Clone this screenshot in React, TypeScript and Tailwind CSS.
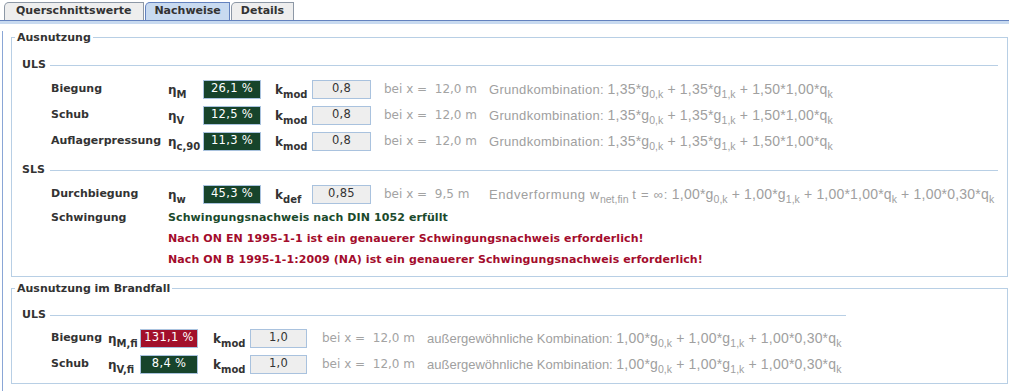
import type { ReactNode } from 'react'

const TABS = [
  { label: 'Querschnittswerte', active: false },
  { label: 'Nachweise', active: true },
  { label: 'Details', active: false },
]

function Sub({ children }: { children: ReactNode }) {
  return <span className="relative top-[4px] text-[10.5px] leading-none">{children}</span>
}

// numbers in the formulas run a little wider than the words
function Num({ children }: { children: ReactNode }) {
  return <span className="text-[14px] tracking-[0.2px]">{children}</span>
}

function Symbol({ base, sub }: { base: string; sub: string }) {
  return (
    <span className="font-bold text-[12px] text-[#333] leading-none whitespace-nowrap">
      {base}
      <span className="relative top-[4px] text-[10px] leading-none">{sub}</span>
    </span>
  )
}

function ValueBox({ value, tone, width }: { value: string; tone: 'ok' | 'fail' | 'plain'; width: string }) {
  const toneCls =
    tone === 'ok'
      ? 'bg-[#17442b] text-white'
      : tone === 'fail'
        ? 'bg-[#a2102b] text-white'
        : 'bg-[#eeeeee] text-[#333]'
  return (
    <div className={`${width} ${toneCls} h-[19px] border border-[#a9c2de] flex items-center justify-center text-[11.5px] tracking-[0.3px]`}>
      {value}
    </div>
  )
}

function Grund({ a }: { a: string }) {
  return (
    <span>
      <span className="tracking-[0.3px]">Grundkombination:</span> <Num>{a}*g</Num>
      <Sub>0,k</Sub>
      <Num> + {a}*g</Num>
      <Sub>1,k</Sub>
      <Num> + 1,50*1,00*q</Num>
      <Sub>k</Sub>
    </span>
  )
}

function Aussergewoehnlich() {
  return (
    <span>
      außergewöhnliche Kombination: <Num>1,00*g</Num>
      <Sub>0,k</Sub>
      <Num> + 1,00*g</Num>
      <Sub>1,k</Sub>
      <Num> + 1,00*0,30*q</Num>
      <Sub>k</Sub>
    </span>
  )
}

function SectionHeader({ title, height }: { title: string; height: string }) {
  return (
    <div className={`flex ${height} items-center pl-[10px]`}>
      <span className="w-[28px] font-bold text-[11px] text-[#333]">{title}</span>
      <div className="h-px flex-1 bg-[#b8cfe5]" />
    </div>
  )
}

type RowProps = {
  label: string
  eta: string
  value: string
  tone: 'ok' | 'fail'
  k: string
  kValue: string
  at: string
  formula: ReactNode
  compact?: boolean
}

function CheckRow({ label, eta, value, tone, k, kValue, at, formula, compact }: RowProps) {
  return (
    <div className="flex h-[26px] items-center pl-[39px] whitespace-nowrap">
      <span className={`${compact ? 'w-[57px]' : 'w-[117px]'} font-bold text-[11px] text-[#333]`}>{label}</span>
      <span className={compact ? 'w-[32px]' : 'w-[35px]'}>
        <Symbol base="η" sub={eta} />
      </span>
      <ValueBox value={value} tone={tone} width="w-[58px]" />
      <span className={`${compact ? 'ml-[15px]' : 'ml-[14px]'} w-[37px]`}>
        <Symbol base="k" sub={k} />
      </span>
      <ValueBox value={kValue} tone="plain" width={compact ? 'w-[57px]' : 'w-[59px]'} />
      <span className={`${compact ? 'ml-[15px]' : 'ml-[13px]'} w-[105px] text-[12px] text-[#a3a3a3] whitespace-pre`}>{at}</span>
      <span className="font-['Liberation_Sans',sans-serif] text-[13px] text-[#a0a0a0]">{formula}</span>
    </div>
  )
}

function Message({ children, color, label }: { children: ReactNode; color: string; label?: string }) {
  return (
    <div className="flex h-[21px] items-center pl-[39px] whitespace-nowrap font-bold text-[11px] tracking-[0.1px]">
      <span className="w-[117px] text-[#333] tracking-normal">{label}</span>
      <span className={color}>{children}</span>
    </div>
  )
}

export default function App() {
  return (
    <div className="w-[1009px] h-[391px] overflow-hidden bg-white font-['DejaVu_Sans',sans-serif]">
      {/* Tab strip */}
      <div className="flex h-[20px] items-end pl-[4px]">
        {TABS.map((t) => (
          <div
            key={t.label}
            className={`h-[18px] flex items-center border-t border-l border-r rounded-tl-[5px] font-bold text-[11px] text-[#333] ${
              t.active
                ? 'bg-[#c8daf0] border-[#6382bf] px-[8px] mx-px'
                : 'bg-[#eeeeee] border-[#8d98a6] px-[9px]'
            } ${t.label === 'Querschnittswerte' ? 'pl-[11px] pr-[12px]' : ''}`}
          >
            {t.label}
          </div>
        ))}
      </div>
      <div className="h-px bg-[#6382bf]" />
      <div className="h-[3px] bg-[#c8daf0]" />

      {/* Content panel */}
      <div className="ml-[2px] h-[400px] border-l border-[#8aa6d6]">
        <fieldset className="ml-[8px] mt-[7px] w-[997px] border border-[#b8cfe5] pt-[10px] pb-[5px] pr-[9px]">
          <legend className="ml-[3px] px-[2px] font-bold text-[11px] leading-[13px] text-[#333]">Ausnutzung</legend>
          <SectionHeader title="ULS" height="h-[22px]" />
          <CheckRow label="Biegung" eta="M" value="26,1 %" tone="ok" k="mod" kValue="0,8" at="bei x =  12,0 m" formula={<Grund a="1,35" />} />
          <CheckRow label="Schub" eta="V" value="12,5 %" tone="ok" k="mod" kValue="0,8" at="bei x =  12,0 m" formula={<Grund a="1,35" />} />
          <CheckRow label="Auflagerpressung" eta="c,90" value="11,3 %" tone="ok" k="mod" kValue="0,8" at="bei x =  12,0 m" formula={<Grund a="1,35" />} />
          <div className="mt-[5px]">
            <SectionHeader title="SLS" height="h-[22px]" />
          </div>
          <CheckRow
            label="Durchbiegung"
            eta="w"
            value="45,3 %"
            tone="ok"
            k="def"
            kValue="0,85"
            at="bei x =  9,5 m"
            formula={
              <span>
                <span className="tracking-[0.6px]">Endverformung w</span>
                <Sub>net,fin</Sub> <span className="tracking-[0.8px]">t = ∞:</span> <Num>1,00*g</Num>
                <Sub>0,k</Sub>
                <Num> + 1,00*g</Num>
                <Sub>1,k</Sub>
                <Num> + 1,00*1,00*q</Num>
                <Sub>k</Sub>
                <Num> + 1,00*0,30*q</Num>
                <Sub>k</Sub>
              </span>
            }
          />
          <div className="mt-px">
            <Message label="Schwingung" color="text-[#1b4a2c]">Schwingungsnachweis nach DIN 1052 erfüllt</Message>
          </div>
          <Message color="text-[#a30c2c]">Nach ON EN 1995-1-1 ist ein genauerer Schwingungsnachweis erforderlich!</Message>
          <Message color="text-[#a30c2c]">Nach ON B 1995-1-1:2009 (NA) ist ein genauerer Schwingungsnachweis erforderlich!</Message>
        </fieldset>

        <fieldset className="ml-[8px] mt-[5px] w-[997px] border border-[#b8cfe5] pt-[11px] pb-[6px]">
          <legend className="ml-[3px] px-[2px] font-bold text-[11px] leading-[13px] text-[#333]">Ausnutzung im Brandfall</legend>
          <div className="w-[834px]">
            <SectionHeader title="ULS" height="h-[19px]" />
            <CheckRow compact label="Biegung" eta="M,fi" value="131,1 %" tone="fail" k="mod" kValue="1,0" at="bei x =  12,0 m" formula={<Aussergewoehnlich />} />
            <CheckRow compact label="Schub" eta="V,fi" value="8,4 %" tone="ok" k="mod" kValue="1,0" at="bei x =  12,0 m" formula={<Aussergewoehnlich />} />
          </div>
        </fieldset>
      </div>
    </div>
  )
}
